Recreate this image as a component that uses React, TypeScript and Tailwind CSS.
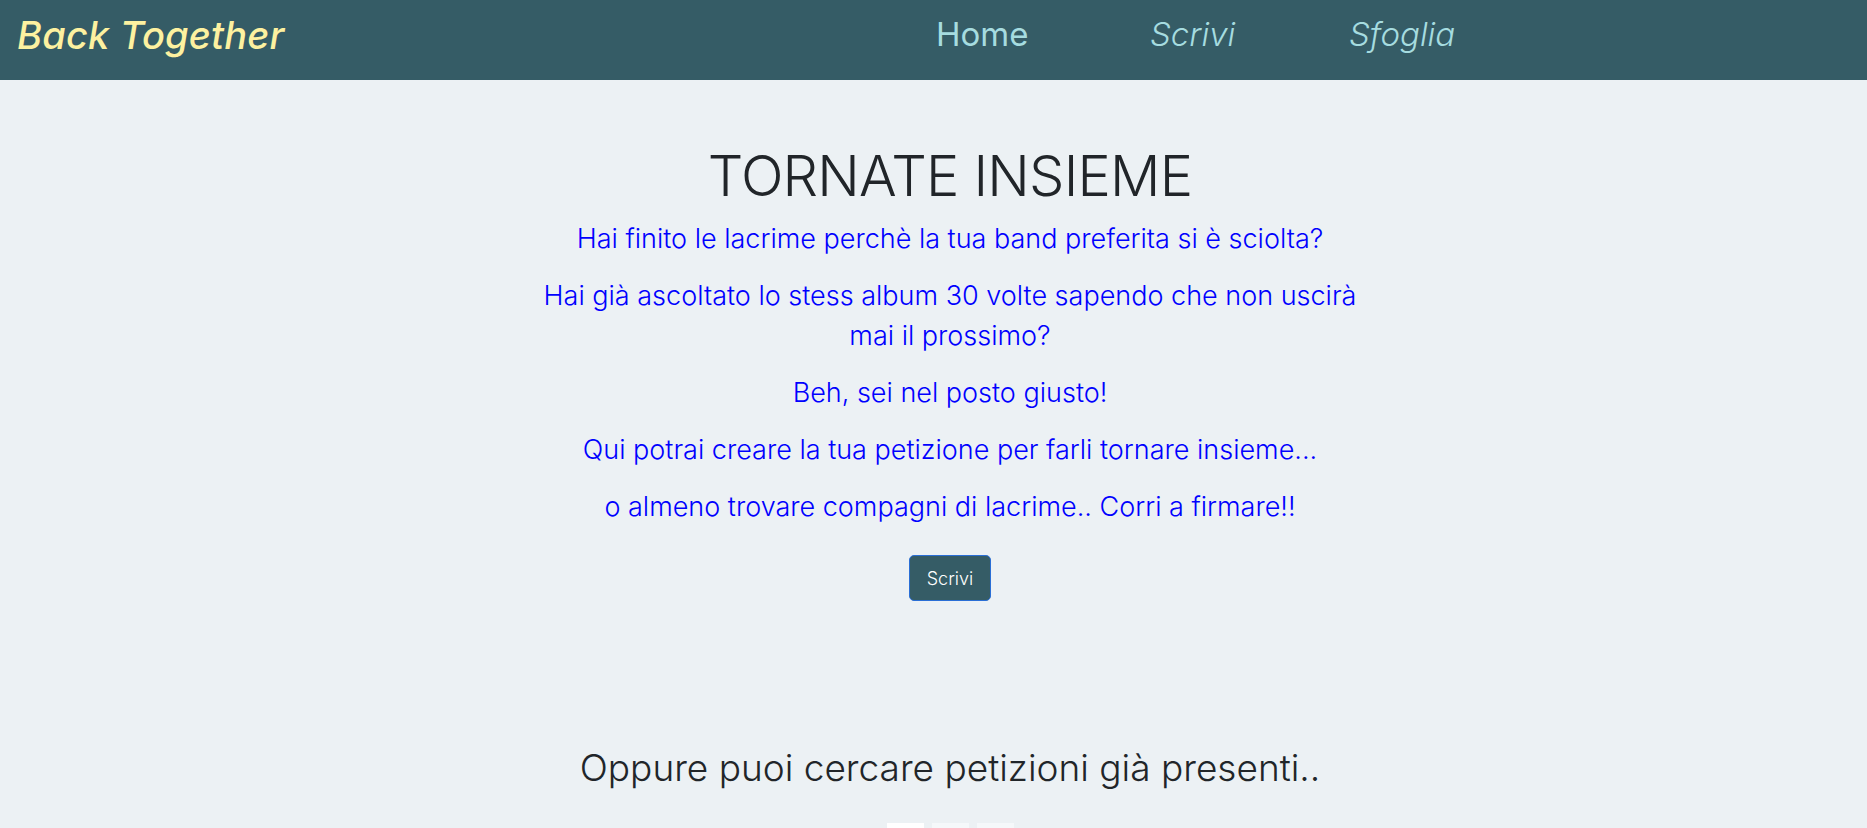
import React from "react";

const lines = [
  "Hai finito le lacrime perchè la tua band preferita si è sciolta?",
  null,
  "Beh, sei nel posto giusto!",
  "Qui potrai creare la tua petizione per farli tornare insieme...",
  "o almeno trovare compagni di lacrime.. Corri a firmare!!",
];

export default function App() {
  return (
    <div className="min-h-[828px] overflow-hidden bg-[#ecf1f4] font-['Inter','Liberation_Sans',sans-serif]">
      <header className="flex h-20 items-center bg-[#355c66] pb-[10px]">
        <div className="w-[936px] pl-[17px]">
          <a className="text-[38px] font-medium italic tracking-[0.2px] text-[#fdf1a0]" href="#">
            Back Together
          </a>
        </div>
        <nav className="flex items-center text-[33px] text-[#a6dce0]">
          <a href="#" className="w-[214px]">Home</a>
          <a href="#" className="w-[199px] font-light italic">Scrivi</a>
          <a href="#" className="font-light italic">Sfoglia</a>
        </nav>
      </header>

      <main className="flex flex-col items-center pl-[33px] text-center">
        <h1 className="mt-[60px] text-[56px] font-light leading-[72px] tracking-[-0.8px] text-[#212529]">
          TORNATE INSIEME
        </h1>
        <div className="mt-[7px] flex flex-col gap-[17px] text-[27px] font-light leading-[40px] text-[#0000ff]">
          {lines.map((line, i) =>
            line === null ? (
              <p key={i}>
                Hai già ascoltato lo stess album 30 volte sapendo che non uscirà
                <br />
                mai il prossimo?
              </p>
            ) : (
              <p key={i}>{line}</p>
            ),
          )}
        </div>
        <button
          type="button"
          className="mt-[28px] h-[46px] w-[82px] rounded-[5px] border border-[#2a6fd6] bg-[#355c66] text-[18px] font-light text-white"
        >
          Scrivi
        </button>

        <h2 className="mt-[145px] text-[37px] font-light leading-[44px] text-[#212529]">
          Oppure puoi cercare petizioni già presenti..
        </h2>
        <div className="mt-[33px] flex gap-2">
          <div className="h-10 w-[37px] bg-white" />
          <div className="h-10 w-[37px] bg-[#f5f8fa]" />
          <div className="h-10 w-[37px] bg-[#f5f8fa]" />
        </div>
      </main>
    </div>
  );
}
